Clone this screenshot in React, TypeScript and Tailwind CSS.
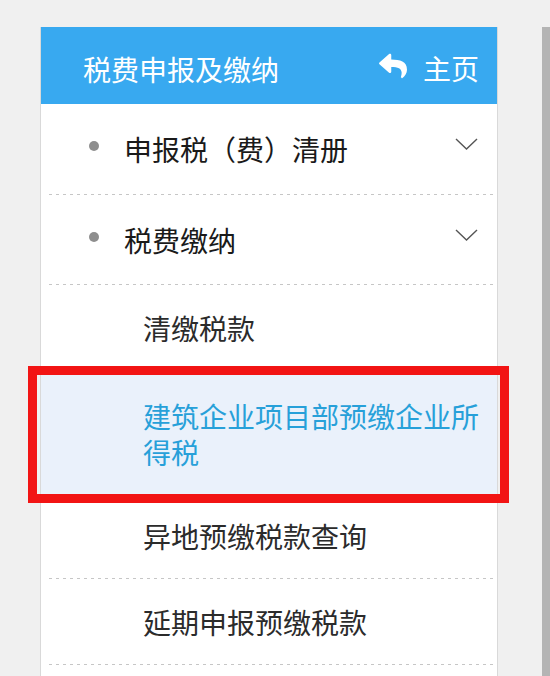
import React from "react";
import { FaReply } from "react-icons/fa";

const font = { fontFamily: '"Noto Sans CJK SC", "Noto Sans", sans-serif' };

function Divider() {
  return (
    <div className="ml-[8px] h-px bg-[linear-gradient(to_right,#c6c6c6_3px,transparent_3px)] bg-[length:7px_1px]" />
  );
}

function Chevron() {
  return (
    <svg width="23" height="12" viewBox="0 0 23 12" fill="none">
      <polyline points="1,1 11.5,11 22,1" stroke="#555" strokeWidth="1.4" />
    </svg>
  );
}

function TopRow({ label, h }: { label: string; h: string }) {
  return (
    <div className={`flex items-center ${h} pl-[48px] pr-[19px]`}>
      <div className="w-[10px] h-[10px] rounded-full bg-[#8e8e8e] mb-[6px]" />
      <span className="ml-[25px] text-[28px] leading-[36px] text-[#1a1a1a]">{label}</span>
      <div className="ml-auto mb-[10px]">
        <Chevron />
      </div>
    </div>
  );
}

function SubRow({ label, h }: { label: string; h: string }) {
  return (
    <div className={`flex items-center ${h} pl-[102px]`}>
      <span className="text-[28px] leading-[36px] text-[#2b2b2b]">{label}</span>
    </div>
  );
}

export default function App() {
  return (
    <div className="h-[676px] overflow-hidden bg-[#f0f0f0] flex items-start" style={font}>
      <div className="ml-[40px] mt-[27px] w-[458px] shrink-0 bg-white border-x border-[#d9d9d9]">
        <div className="h-[77px] bg-[#38a9f0] flex items-center pl-[42px] pr-[18px] text-white">
          <span className="text-[28px] leading-[36px] mt-[6px]">税费申报及缴纳</span>
          <div className="ml-auto flex items-center mt-[4px]">
            <FaReply size={28} className="mb-[4px]" />
            <span className="ml-[16px] text-[28px] leading-[36px]">主页</span>
          </div>
        </div>
        <TopRow label="申报税（费）清册" h="h-[90px]" />
        <Divider />
        <TopRow label="税费缴纳" h="h-[89px]" />
        <Divider />
        <SubRow label="清缴税款" h="h-[86px]" />
        <div className="relative bg-[#eaf1fb] h-[123px] flex items-center pl-[102px] pr-[18px]">
          <span className="text-[28px] leading-[36px] text-[#27a0d9] mt-[2px]">建筑企业项目部预缴企业所得税</span>
          <div className="absolute -top-[5px] -left-[13px] w-[481px] h-[137px] border-[9px] border-[#f21414]" />
        </div>
        <SubRow label="异地预缴税款查询" h="h-[84px]" />
        <Divider />
        <SubRow label="延期申报预缴税款" h="h-[85px]" />
        <Divider />
        <div className="h-[40px]" />
      </div>
      <div className="ml-auto mt-[27px] w-[8px] h-[649px] bg-[#b4b4b4]" />
    </div>
  );
}
